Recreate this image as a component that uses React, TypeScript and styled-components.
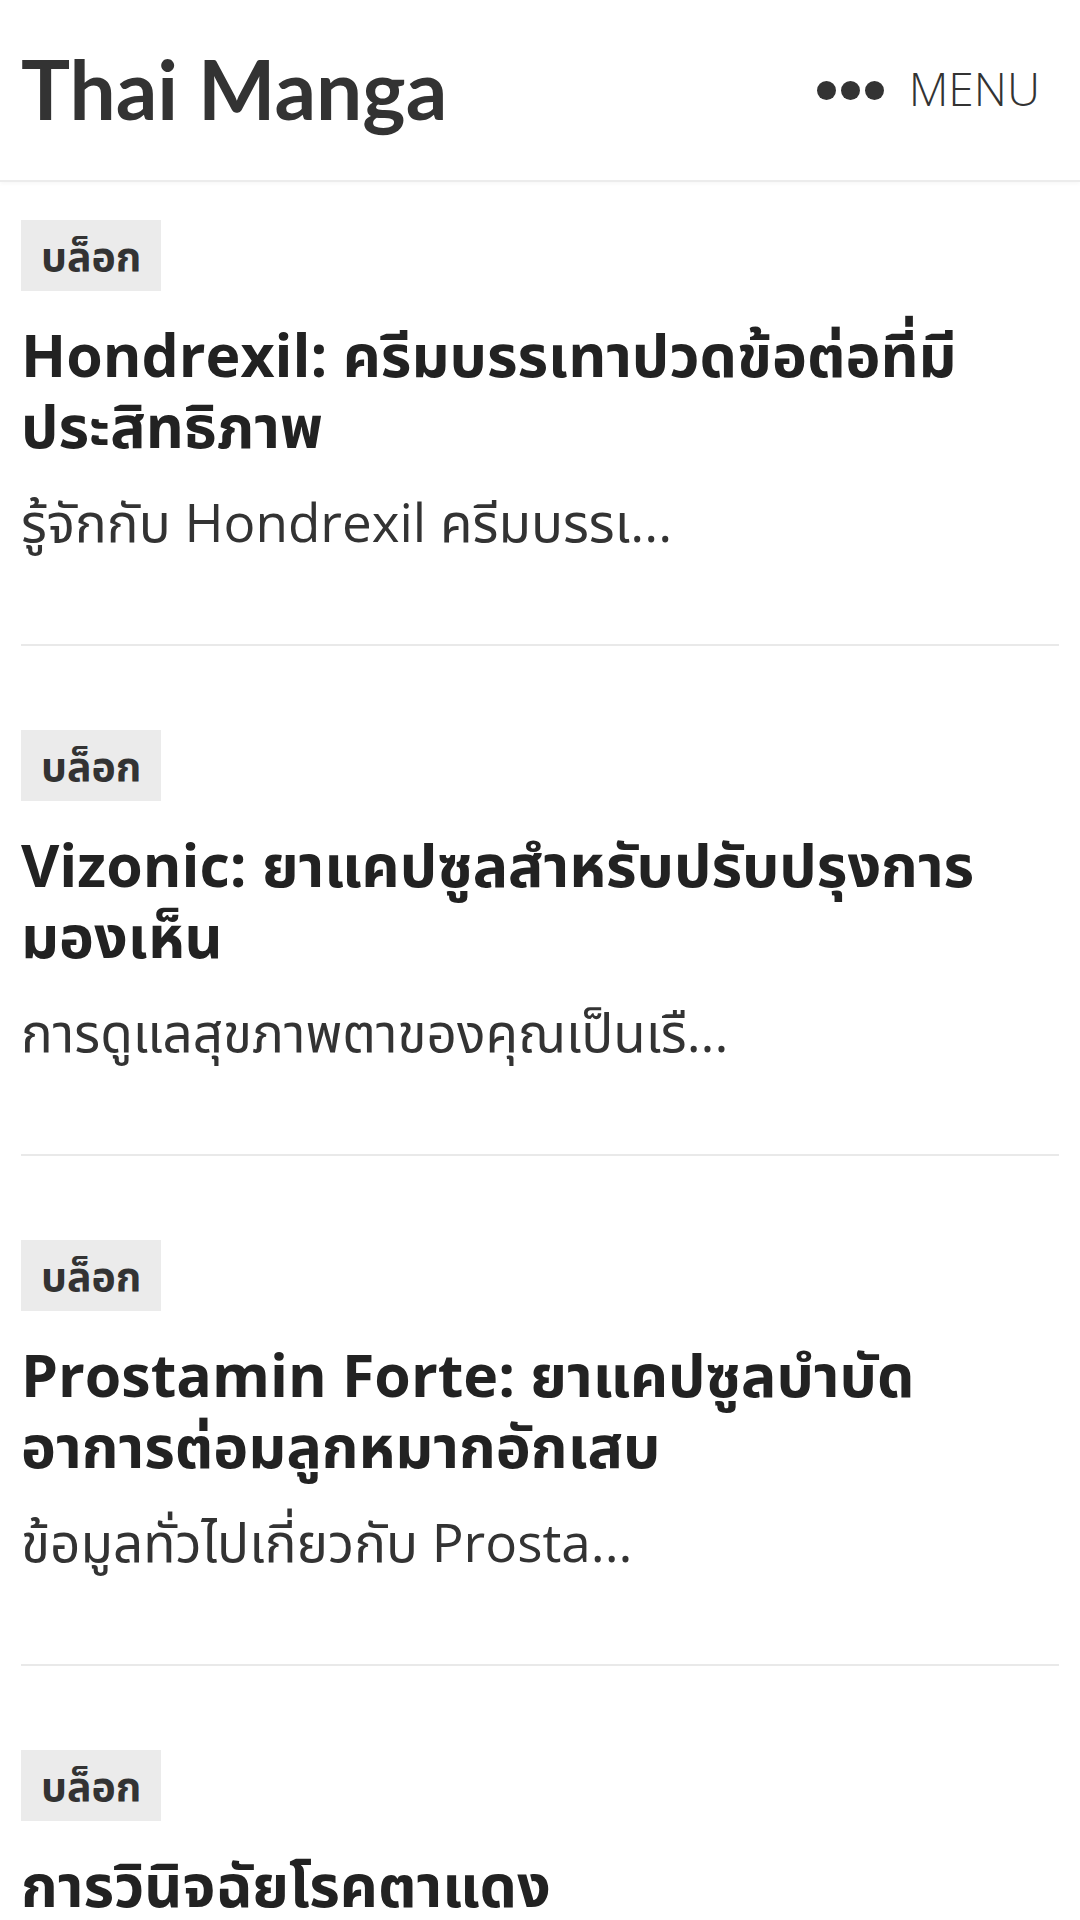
import styled, { createGlobalStyle } from "styled-components";

const GlobalStyle = createGlobalStyle`
    html, body {
        margin: 0;
        padding: 0;
        background: #ffffff;
    }
    body {
        font-family: "Open Sans", "Noto Sans Thai", "Noto Sans", "DejaVu Sans", sans-serif;
        color: #333333;
    }
`;

const SheaderFrame = styled.header`
    display: flex;
    align-items: center;
    justify-content: space-between;
    height: 180px;
    padding: 0 21px;
    border-bottom: 2px solid #ececec;
    box-shadow: 0 2px 4px rgba(0, 0, 0, 0.03);
`;
const Sh1SiteTitle = styled.h1`
    margin: 0 0 4px 0;
    font-family: "Lato", "Open Sans", sans-serif;
    font-size: 82px;
    font-weight: 700;
    color: #333333;
    line-height: 1;
`;
const SbuttonMenu = styled.button`
    display: flex;
    align-items: center;
    gap: 25px;
    padding: 0 19px 4px 0;
    border: none;
    background: none;
    font-family: inherit;
    font-size: 46px;
    font-weight: 300;
    color: #333333;
    cursor: pointer;
`;
const SspanDots = styled.span`
    display: flex;
    gap: 5px;
    margin-top: 4px;
`;
const SspanDot = styled.span`
    width: 19px;
    height: 19px;
    border-radius: 50%;
    background: #333333;
`;
const SmainList = styled.main`
    padding: 38px 21px 0 21px;
`;
const SarticleItem = styled.article`
    padding-bottom: 88px;
    margin-bottom: 84px;
    border-bottom: 2px solid #e9e9e9;
`;
const SspanCategory = styled.span`
    display: inline-block;
    height: 71px;
    line-height: 71px;
    padding: 0 20px;
    background: #ebebeb;
    font-size: 41px;
    font-weight: 700;
    color: #333333;
`;
const Sh2Title = styled.h2`
    margin: 28px 0 0 0;
    font-size: 59px;
    font-weight: 700;
    line-height: 71px;
    color: #222222;
`;
const SpExcerpt = styled.p`
    margin: 27px 0 0 0;
    font-size: 53px;
    font-weight: 400;
    line-height: 68px;
    color: #333333;
`;

type Post = {
    title: string;
    excerpt?: string;
};

const POSTS: Post[] = [
    {
        title: "Hondrexil: ครีมบรรเทาปวดข้อต่อที่มีประสิทธิภาพ",
        excerpt: "รู้จักกับ Hondrexil ครีมบรรเ...",
    },
    {
        title: "Vizonic: ยาแคปซูลสำหรับปรับปรุงการมองเห็น",
        excerpt: "การดูแลสุขภาพตาของคุณเป็นเรื...",
    },
    {
        title: "Prostamin Forte: ยาแคปซูลบำบัดอาการต่อมลูกหมากอักเสบ",
        excerpt: "ข้อมูลทั่วไปเกี่ยวกับ Prosta...",
    },
    {
        title: "การวินิจฉัยโรคตาแดง",
    },
];

const App = () => {
    return (
        <>
            <GlobalStyle />
            <SheaderFrame>
                <Sh1SiteTitle>Thai Manga</Sh1SiteTitle>
                <SbuttonMenu type="button">
                    <SspanDots>
                        <SspanDot />
                        <SspanDot />
                        <SspanDot />
                    </SspanDots>
                    MENU
                </SbuttonMenu>
            </SheaderFrame>

            <SmainList>
                {POSTS.map((post) => (
                    <SarticleItem key={post.title}>
                        <SspanCategory>บล็อก</SspanCategory>
                        <Sh2Title>{post.title}</Sh2Title>
                        {post.excerpt && <SpExcerpt>{post.excerpt}</SpExcerpt>}
                    </SarticleItem>
                ))}
            </SmainList>
        </>
    );
}

export default App;
